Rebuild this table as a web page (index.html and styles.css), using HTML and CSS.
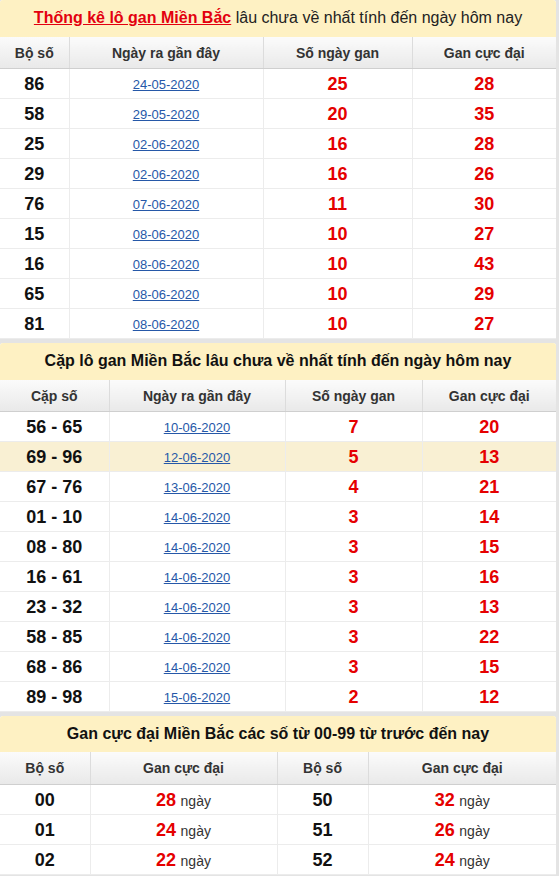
FILE: index.html
```html
<!DOCTYPE html>
<html lang="vi">
<head>
<meta charset="utf-8">
<title>Thống kê lô gan Miền Bắc</title>
<link rel="stylesheet" href="styles.css">
</head>
<body>
<div class="page">
  <section class="box">
    <h2 class="box-title"><a href="#" class="title-link">Thống kê lô gan Miền Bắc</a> <span class="title-normal">lâu chưa về nhất tính đến ngày hôm nay</span></h2>
    <table class="stat t1">
      <colgroup><col class="c1"><col class="c2"><col class="c3"><col class="c4"></colgroup>
      <thead><tr><th>Bộ số</th><th>Ngày ra gần đây</th><th>Số ngày gan</th><th>Gan cực đại</th></tr></thead>
      <tbody>
        <tr><td class="num">86</td><td><a href="#" class="date">24-05-2020</a></td><td class="red">25</td><td class="red">28</td></tr>
        <tr><td class="num">58</td><td><a href="#" class="date">29-05-2020</a></td><td class="red">20</td><td class="red">35</td></tr>
        <tr><td class="num">25</td><td><a href="#" class="date">02-06-2020</a></td><td class="red">16</td><td class="red">28</td></tr>
        <tr><td class="num">29</td><td><a href="#" class="date">02-06-2020</a></td><td class="red">16</td><td class="red">26</td></tr>
        <tr><td class="num">76</td><td><a href="#" class="date">07-06-2020</a></td><td class="red">11</td><td class="red">30</td></tr>
        <tr><td class="num">15</td><td><a href="#" class="date">08-06-2020</a></td><td class="red">10</td><td class="red">27</td></tr>
        <tr><td class="num">16</td><td><a href="#" class="date">08-06-2020</a></td><td class="red">10</td><td class="red">43</td></tr>
        <tr><td class="num">65</td><td><a href="#" class="date">08-06-2020</a></td><td class="red">10</td><td class="red">29</td></tr>
        <tr><td class="num">81</td><td><a href="#" class="date">08-06-2020</a></td><td class="red">10</td><td class="red">27</td></tr>
      </tbody>
    </table>
  </section>

  <section class="box">
    <h2 class="box-title bold">Cặp lô gan Miền Bắc lâu chưa về nhất tính đến ngày hôm nay</h2>
    <table class="stat t2">
      <colgroup><col class="c1"><col class="c2"><col class="c3"><col class="c4"></colgroup>
      <thead><tr><th>Cặp số</th><th>Ngày ra gần đây</th><th>Số ngày gan</th><th>Gan cực đại</th></tr></thead>
      <tbody>
        <tr><td class="num">56 - 65</td><td><a href="#" class="date">10-06-2020</a></td><td class="red">7</td><td class="red">20</td></tr>
        <tr class="hl"><td class="num">69 - 96</td><td><a href="#" class="date">12-06-2020</a></td><td class="red">5</td><td class="red">13</td></tr>
        <tr><td class="num">67 - 76</td><td><a href="#" class="date">13-06-2020</a></td><td class="red">4</td><td class="red">21</td></tr>
        <tr><td class="num">01 - 10</td><td><a href="#" class="date">14-06-2020</a></td><td class="red">3</td><td class="red">14</td></tr>
        <tr><td class="num">08 - 80</td><td><a href="#" class="date">14-06-2020</a></td><td class="red">3</td><td class="red">15</td></tr>
        <tr><td class="num">16 - 61</td><td><a href="#" class="date">14-06-2020</a></td><td class="red">3</td><td class="red">16</td></tr>
        <tr><td class="num">23 - 32</td><td><a href="#" class="date">14-06-2020</a></td><td class="red">3</td><td class="red">13</td></tr>
        <tr><td class="num">58 - 85</td><td><a href="#" class="date">14-06-2020</a></td><td class="red">3</td><td class="red">22</td></tr>
        <tr><td class="num">68 - 86</td><td><a href="#" class="date">14-06-2020</a></td><td class="red">3</td><td class="red">15</td></tr>
        <tr><td class="num">89 - 98</td><td><a href="#" class="date">15-06-2020</a></td><td class="red">2</td><td class="red">12</td></tr>
      </tbody>
    </table>
  </section>

  <section class="box">
    <h2 class="box-title bold short">Gan cực đại Miền Bắc các số từ 00-99 từ trước đến nay</h2>
    <table class="stat t3">
      <colgroup><col class="c1"><col class="c2"><col class="c3"><col class="c4"></colgroup>
      <thead><tr><th>Bộ số</th><th>Gan cực đại</th><th>Bộ số</th><th>Gan cực đại</th></tr></thead>
      <tbody>
        <tr><td class="num">00</td><td><span class="red">28</span> <span class="unit">ngày</span></td><td class="num">50</td><td><span class="red">32</span> <span class="unit">ngày</span></td></tr>
        <tr><td class="num">01</td><td><span class="red">24</span> <span class="unit">ngày</span></td><td class="num">51</td><td><span class="red">26</span> <span class="unit">ngày</span></td></tr>
        <tr><td class="num">02</td><td><span class="red">22</span> <span class="unit">ngày</span></td><td class="num">52</td><td><span class="red">24</span> <span class="unit">ngày</span></td></tr>
      </tbody>
    </table>
  </section>
</div>
</body>
</html>
```

FILE: styles.css
```css
html, body {
  margin: 0;
  padding: 0;
}
body {
  background: #e4e4e4;
  font-family: "Liberation Sans", Arial, sans-serif;
  color: #111;
}
.page {
  width: 556px;
  display: flex;
  flex-direction: column;
  gap: 4px;
}
.box {
  background: #fff;
  border-radius: 3px 3px 0 0;
  overflow: hidden;
}
.box-title {
  margin: 0;
  height: 37px;
  line-height: 35px;
  background: #fef1c3;
  text-align: center;
  font-size: 16px;
  font-weight: normal;
  color: #111;
  white-space: nowrap;
}
.box-title.bold {
  font-weight: bold;
}
.box-title.short {
  height: 36px;
}
.title-link {
  color: #e3000f;
  font-weight: bold;
  text-decoration: underline;
}
.title-normal {
  color: #222;
}
.stat {
  width: 556px;
  border-collapse: collapse;
  table-layout: fixed;
}
.t1 .c1 { width: 69px; }
.t1 .c2 { width: 194px; }
.t1 .c3 { width: 149px; }
.t1 .c4 { width: 144px; }
.t2 .c1 { width: 109px; }
.t2 .c2 { width: 176px; }
.t2 .c3 { width: 137px; }
.t2 .c4 { width: 134px; }
.t3 .c1 { width: 90px; }
.t3 .c2 { width: 187px; }
.t3 .c3 { width: 91px; }
.t3 .c4 { width: 188px; }
.stat th {
  height: 31px;
  padding: 0;
  font-size: 14px;
  font-weight: bold;
  color: #333;
  background: linear-gradient(to bottom, #fbfbfb, #e9e9e9);
  border-right: 1px solid #dcdcdc;
  border-bottom: 1px solid #cfcfcf;
  text-align: center;
}
.t3 th { height: 32px; }
.stat th:last-child,
.stat td:last-child {
  border-right: none;
}
.stat td {
  height: 28px;
  padding: 1px 0 0;
  text-align: center;
  vertical-align: middle;
  border-right: 1px solid #ececec;
  border-bottom: 1px solid #ececec;
  line-height: 20px;
}
.stat tr.hl td {
  background: #f9f0d3;
}
.num {
  font-size: 18px;
  font-weight: bold;
  color: #111;
}
.red {
  font-size: 18px;
  font-weight: bold;
  color: #e50000;
}
.date {
  font-size: 13px;
  color: #2658a8;
  text-decoration: underline;
}
.unit {
  font-size: 14px;
  color: #333;
}
```
